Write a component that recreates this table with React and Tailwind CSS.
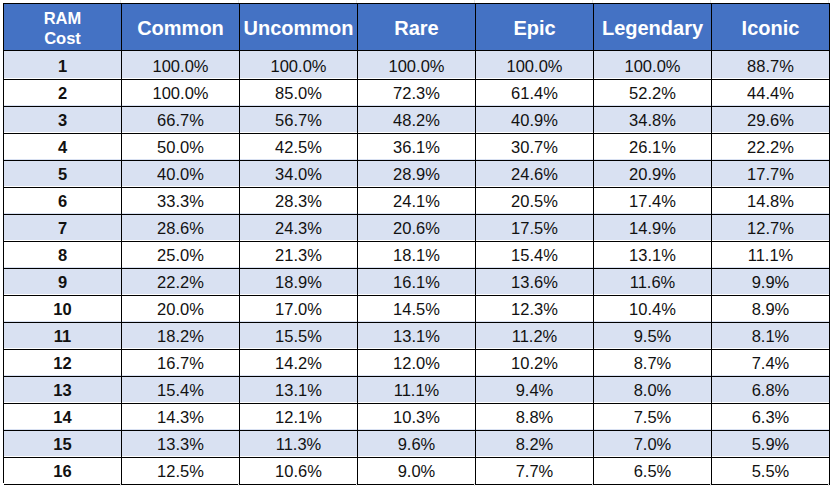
import React from "react";

const headers = ["Common", "Uncommon", "Rare", "Epic", "Legendary", "Iconic"];

const rows = [
  ["100.0%", "100.0%", "100.0%", "100.0%", "100.0%", "88.7%"],
  ["100.0%", "85.0%", "72.3%", "61.4%", "52.2%", "44.4%"],
  ["66.7%", "56.7%", "48.2%", "40.9%", "34.8%", "29.6%"],
  ["50.0%", "42.5%", "36.1%", "30.7%", "26.1%", "22.2%"],
  ["40.0%", "34.0%", "28.9%", "24.6%", "20.9%", "17.7%"],
  ["33.3%", "28.3%", "24.1%", "20.5%", "17.4%", "14.8%"],
  ["28.6%", "24.3%", "20.6%", "17.5%", "14.9%", "12.7%"],
  ["25.0%", "21.3%", "18.1%", "15.4%", "13.1%", "11.1%"],
  ["22.2%", "18.9%", "16.1%", "13.6%", "11.6%", "9.9%"],
  ["20.0%", "17.0%", "14.5%", "12.3%", "10.4%", "8.9%"],
  ["18.2%", "15.5%", "13.1%", "11.2%", "9.5%", "8.1%"],
  ["16.7%", "14.2%", "12.0%", "10.2%", "8.7%", "7.4%"],
  ["15.4%", "13.1%", "11.1%", "9.4%", "8.0%", "6.8%"],
  ["14.3%", "12.1%", "10.3%", "8.8%", "7.5%", "6.3%"],
  ["13.3%", "11.3%", "9.6%", "8.2%", "7.0%", "5.9%"],
  ["12.5%", "10.6%", "9.0%", "7.7%", "6.5%", "5.5%"],
];

const App = () => {
  return (
    <div
      className="w-[833px] h-[486px] bg-white overflow-hidden"
      style={{ fontFamily: '"Liberation Sans", Arial, sans-serif' }}
    >
      {/* faint sheet gridlines above the table */}
      <div className="grid grid-cols-[3px_repeat(7,118px)] h-[3px]">
        <div />
        {Array.from({ length: 7 }).map((_, i) => (
          <div key={i} className="border-r border-[#e3e3e3]" />
        ))}
      </div>

      <div className="ml-[3px] w-[827px] border-l border-t border-black">
        {/* header */}
        <div className="grid grid-cols-[118px_repeat(6,118px)] h-[47px] bg-[#4472c4] text-white font-bold">
          <div className="border-r border-b border-black flex flex-col items-center justify-center text-[16.5px] leading-[20px] pt-[1px]">
            <span>RAM</span>
            <span>Cost</span>
          </div>
          {headers.map((h) => (
            <div
              key={h}
              className="border-r border-b border-black flex items-center justify-center text-[20px] pt-[1px]"
            >
              {h}
            </div>
          ))}
        </div>

        {/* body */}
        {rows.map((r, i) => (
          <div
            key={i}
            className={
              "grid grid-cols-[118px_repeat(6,118px)] h-[27px] text-[16.5px] text-[#111] " +
              (i % 2 === 0 ? "bg-[#d9e1f2]" : "bg-white")
            }
          >
            <div className="border-r border-b border-black flex items-center justify-center font-bold pt-[3px]">
              {i + 1}
            </div>
            {r.map((v, j) => (
              <div
                key={j}
                className="border-r border-b border-black flex items-center justify-center pt-[3px]"
              >
                {v}
              </div>
            ))}
          </div>
        ))}
      </div>

      {/* faint sheet gridlines below the table */}
      <div className="grid grid-cols-[3px_repeat(7,118px)] h-[4px]">
        <div />
        {Array.from({ length: 7 }).map((_, i) => (
          <div key={i} className="border-r border-[#e3e3e3]" />
        ))}
      </div>
    </div>
  );
};

export default App;
